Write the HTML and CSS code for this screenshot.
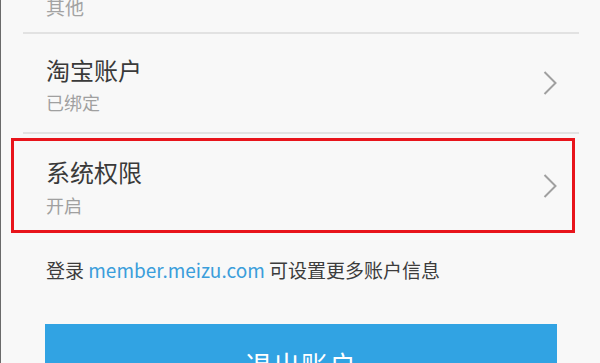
FILE: index.html
```html
<!DOCTYPE html>
<html lang="zh-CN">
<head>
<meta charset="utf-8">
<title>账户设置</title>
<link rel="stylesheet" href="styles.css">
</head>
<body>
<div class="screen">
  <div class="section-label">其他</div>
  <div class="divider"></div>
  <div class="row">
    <div class="row-text">
      <div class="row-title">淘宝账户</div>
      <div class="row-sub">已绑定</div>
    </div>
    <svg class="chev" width="14" height="24" viewBox="0 0 14 24"><polyline points="1.5,1 12.5,12 1.5,23" fill="none" stroke="#a0a0a0" stroke-width="2"/></svg>
  </div>
  <div class="divider"></div>
  <div class="highlight">
    <div class="row-text">
      <div class="row-title">系统权限</div>
      <div class="row-sub">开启</div>
    </div>
    <svg class="chev" width="14" height="24" viewBox="0 0 14 24"><polyline points="1.5,1 12.5,12 1.5,23" fill="none" stroke="#a0a0a0" stroke-width="2"/></svg>
  </div>
  <p class="note">登录 <span class="link">member.meizu.com</span> 可设置更多账户信息</p>
  <div class="logout">退出账户</div>
</div>
</body>
</html>
```
FILE: styles.css
```css
html, body {
  margin: 0;
  padding: 0;
}
body {
  width: 600px;
  height: 363px;
  overflow: hidden;
  background: #f8f8f8;
  font-family: "Noto Sans CJK SC", "Noto Sans", sans-serif;
}
.screen {
  height: 363px;
  overflow: hidden;
  background: #f8f8f8;
  border-left: 1px solid #6a6a6a;
}
.section-label {
  margin-top: -3px;
  padding-left: 45px;
  height: 20px;
  line-height: 20px;
  font-size: 19px;
  color: #a3a3a3;
}
.divider {
  height: 2px;
  margin: 15px 21px 0 22px;
  background: #e2e2e2;
}
.row + .divider {
  margin-top: 0;
}
.row {
  height: 98px;
  display: flex;
  align-items: center;
  justify-content: space-between;
  padding: 0 43px 0 45px;
}
.row .row-text {
  padding-top: 2px;
}
.row-title {
  font-size: 24px;
  line-height: 30px;
  color: #3a3a3a;
}
.row-sub {
  margin-top: 5px;
  font-size: 18px;
  line-height: 24px;
  color: #a0a0a0;
}
.highlight {
  box-sizing: border-box;
  width: 564px;
  height: 95px;
  margin: 4px 0 0 10px;
  border: 3px solid #e8141b;
  display: flex;
  align-items: center;
  justify-content: space-between;
  padding: 0 15px 0 32px;
}
.highlight .row-text {
  padding-top: 2px;
}
.highlight .row-sub {
  margin-top: 6px;
}
.chev {
  display: block;
  flex: none;
}
.note {
  margin: 25px 0 0 45px;
  font-size: 19px;
  line-height: 24px;
  color: #3c3c3c;
}
.link {
  color: #3b9edb;
}
.logout {
  width: 512px;
  height: 82px;
  margin: 42px 0 0 44px;
  background: #31a3e3;
  color: #ffffff;
  font-size: 27px;
  line-height: 82px;
  text-align: center;
  letter-spacing: 1px;
}
```
